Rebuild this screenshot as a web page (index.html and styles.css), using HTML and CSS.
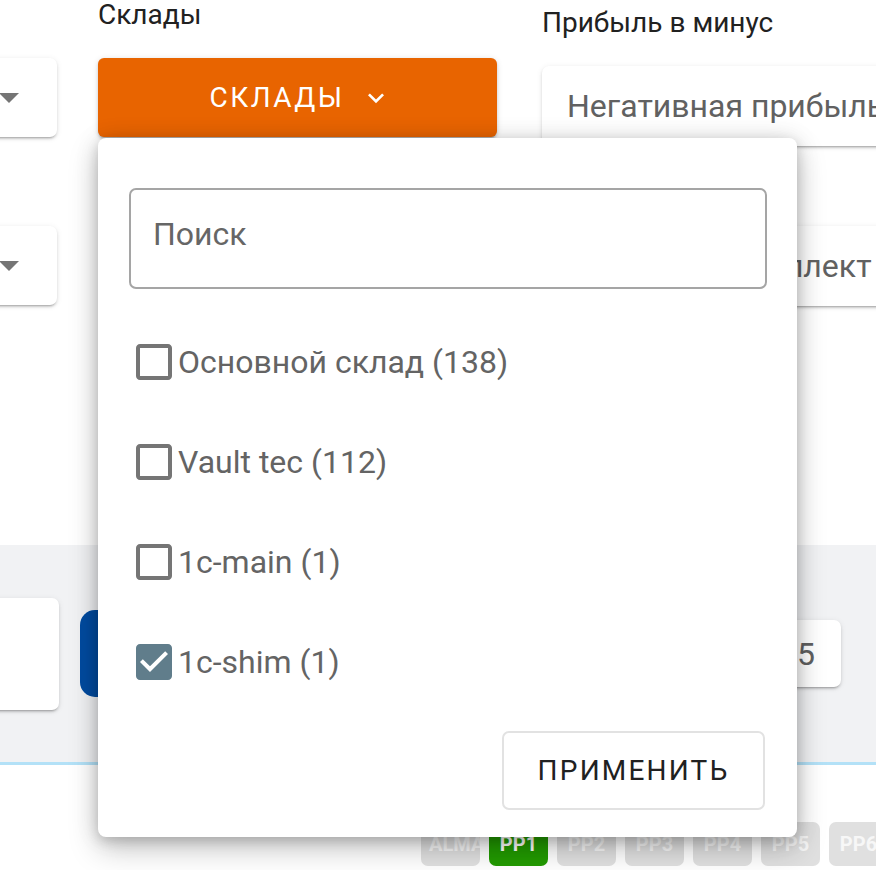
FILE: index.html
```html
<!DOCTYPE html>
<html lang="ru">
<head>
<meta charset="utf-8">
<title>Склады</title>
<link rel="stylesheet" href="styles.css">
</head>
<body>
<div class="page">
  <section class="filters">
    <div class="col col-a">
      <div class="card select"><span class="tri"></span></div>
      <div class="card select second"><span class="tri"></span></div>
    </div>
    <div class="col col-b">
      <div class="label">Склады</div>
      <div class="dropdown">
        <button class="btn-orange">
          <span class="btn-text">СКЛАДЫ</span>
          <svg class="chev" viewBox="0 0 24 24" width="32" height="32"><path d="M16.59 8.59L12 13.17 7.41 8.59 6 10l6 6 6-6z" fill="#fff"/></svg>
        </button>
        <div class="menu">
          <input class="search" type="text" placeholder="Поиск">
          <ul class="options">
            <li class="option">
              <svg class="cb" viewBox="0 0 24 24" width="48" height="48"><path d="M19 5v14H5V5h14m0-2H5c-1.11 0-2 .9-2 2v14c0 1.1.89 2 2 2h14c1.1 0 2-.9 2-2V5c0-1.1-.9-2-2-2z" fill="#757575"/></svg>
              <span>Основной склад (138)</span>
            </li>
            <li class="option">
              <svg class="cb" viewBox="0 0 24 24" width="48" height="48"><path d="M19 5v14H5V5h14m0-2H5c-1.11 0-2 .9-2 2v14c0 1.1.89 2 2 2h14c1.1 0 2-.9 2-2V5c0-1.1-.9-2-2-2z" fill="#757575"/></svg>
              <span>Vault tec (112)</span>
            </li>
            <li class="option">
              <svg class="cb" viewBox="0 0 24 24" width="48" height="48"><path d="M19 5v14H5V5h14m0-2H5c-1.11 0-2 .9-2 2v14c0 1.1.89 2 2 2h14c1.1 0 2-.9 2-2V5c0-1.1-.9-2-2-2z" fill="#757575"/></svg>
              <span>1c-main (1)</span>
            </li>
            <li class="option">
              <svg class="cb" viewBox="0 0 24 24" width="48" height="48"><path d="M19 3H5c-1.11 0-2 .9-2 2v14c0 1.1.89 2 2 2h14c1.11 0 2-.9 2-2V5c0-1.1-.89-2-2-2zm-9 14l-5-5 1.41-1.41L10 14.17l7.59-7.59L19 8l-9 9z" fill="#607d8b"/></svg>
              <span>1c-shim (1)</span>
            </li>
          </ul>
          <div class="actions">
            <button class="btn-apply">ПРИМЕНИТЬ</button>
          </div>
        </div>
      </div>
    </div>
    <div class="col col-c">
      <div class="label">Прибыль в минус</div>
      <div class="card field">Негативная прибыль</div>
      <div class="card field second">Выберите комплект</div>
    </div>
  </section>
  <section class="band">
    <div class="card big"></div>
    <div class="btn-blue"></div>
    <div class="card pager">5</div>
  </section>
  <div class="line"></div>
  <section class="badges">
    <span class="badge">ALMA</span>
    <span class="badge active">PP1</span>
    <span class="badge">PP2</span>
    <span class="badge">PP3</span>
    <span class="badge">PP4</span>
    <span class="badge">PP5</span>
    <span class="badge">PP6</span>
  </section>
</div>
</body>
</html>
```
FILE: styles.css
```css
html, body {
  margin: 0;
  padding: 0;
  overflow: hidden;
  background: #fff;
}
body {
  font-family: Roboto, "Noto Sans", sans-serif;
  color: #212121;
  width: 876px;
  height: 870px;
}
.page {
  width: 876px;
  height: 870px;
  overflow: hidden;
}
.filters {
  display: flex;
  height: 545px;
  margin-left: -100px;
}
.col-a {
  width: 157px;
  flex: none;
  padding-top: 58px;
}
.col-b {
  width: 399px;
  flex: none;
  margin-left: 41px;
}
.col-c {
  width: 440px;
  flex: none;
  margin-left: 45px;
  padding-top: 8px;
}
.label {
  height: 58px;
  font-size: 28px;
  line-height: 30px;
  color: #212121;
  white-space: nowrap;
}
.card {
  background: #fff;
  border-radius: 7px;
  box-shadow: 0 3px 2px -2px rgba(0,0,0,.22), 0 2px 3px rgba(0,0,0,.12), 0 1px 6px rgba(0,0,0,.08);
  box-sizing: border-box;
}
.select {
  height: 79px;
  display: flex;
  align-items: center;
  justify-content: flex-end;
  padding-right: 38px;
}
.select.second {
  margin-top: 89px;
}
.tri {
  width: 0;
  height: 0;
  border-left: 10px solid transparent;
  border-right: 10px solid transparent;
  border-top: 10px solid #757575;
}
.field {
  height: 80px;
  display: flex;
  align-items: center;
  padding-left: 25px;
  font-size: 32px;
  color: #616161;
  white-space: nowrap;
  overflow: hidden;
}
.field.second {
  margin-top: 80px;
  padding-left: 29px;
}
.dropdown {
  position: relative;
}
.btn-orange {
  width: 399px;
  height: 79px;
  border: none;
  border-radius: 6px;
  background: #e86400;
  color: #fff;
  font-family: Roboto, sans-serif;
  font-size: 28px;
  letter-spacing: 2.5px;
  display: flex;
  align-items: center;
  justify-content: center;
  box-shadow: 0 3px 2px -2px rgba(0,0,0,.2), 0 2px 3px rgba(0,0,0,.14), 0 1px 6px rgba(0,0,0,.12);
  padding: 0 0 0 6px;
}
.chev {
  margin-left: 15px;
  display: block;
}
.menu {
  position: absolute;
  top: 80px;
  left: 0;
  width: 699px;
  height: 699px;
  box-sizing: border-box;
  background: #fff;
  border-radius: 8px;
  padding: 50px 30px 0 31px;
  box-shadow: 0 12px 30px rgba(0,0,0,.22), 0 4px 12px rgba(0,0,0,.14), 0 0 24px rgba(0,0,0,.10);
  z-index: 10;
}
.search {
  display: block;
  width: 100%;
  height: 101px;
  box-sizing: border-box;
  border: 2px solid #a5a5a5;
  border-radius: 7px;
  padding: 0 0 9px 22px;
  font-family: Roboto, sans-serif;
  font-size: 32px;
  color: #212121;
  outline: none;
}
.search::placeholder {
  color: #666;
}
.options {
  list-style: none;
  margin: 23px 0 0 0;
  padding: 0 0 0 1px;
}
.option {
  height: 100px;
  display: flex;
  align-items: center;
  font-size: 32px;
  color: #646464;
}
.cb {
  display: block;
  flex: none;
}
.actions {
  display: flex;
  justify-content: flex-end;
  margin-top: 19px;
  padding-right: 2px;
}
.btn-apply {
  width: 263px;
  height: 79px;
  background: #fff;
  border: 2px solid #e2e2e2;
  border-radius: 7px;
  font-family: Roboto, sans-serif;
  font-size: 28px;
  letter-spacing: 2.2px;
  color: #212121;
  padding: 0;
}
.band {
  height: 217px;
  background: #f1f2f4;
  display: flex;
  align-items: center;
  margin-left: -100px;
  padding-right: 35px;
}
.big {
  width: 159px;
  height: 112px;
  flex: none;
}
.btn-blue {
  width: 330px;
  height: 87px;
  margin-left: 21px;
  background: #004ba0;
  border-radius: 15px;
  flex: none;
}
.pager {
  margin-left: auto;
  width: 200px;
  height: 67px;
  display: flex;
  align-items: center;
  justify-content: flex-end;
  padding-right: 26px;
  font-size: 32px;
  color: #616161;
}
.line {
  height: 3px;
  background: #b3e1f7;
}
.badges {
  display: flex;
  gap: 9px;
  padding: 57px 0 0 421px;
}
.badge {
  display: block;
  flex: none;
  width: 59px;
  height: 44px;
  box-sizing: border-box;
  padding: 0 8px;
  line-height: 44px;
  text-align: center;
  white-space: nowrap;
  overflow: hidden;
  border-radius: 7px;
  background: #e0e0e0;
  color: #f7f7f7;
  font-weight: bold;
  font-size: 20px;
}
.badge.active {
  background: #229a00;
  color: #fff;
}
```
